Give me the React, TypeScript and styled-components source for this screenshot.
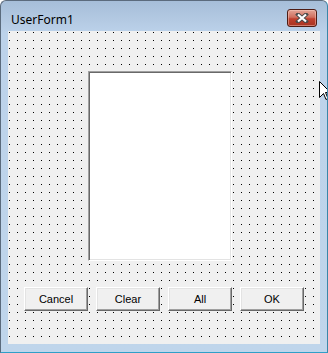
import styled, { createGlobalStyle } from "styled-components";

const GlobalStyle = createGlobalStyle`
  html, body {
    margin: 0;
    padding: 0;
    background: #ffffff;
  }
`;

const Window = styled.div`
  position: relative;
  width: 328px;
  height: 353px;
  box-sizing: border-box;
  display: flex;
  flex-direction: column;
  border: 1px solid #5b6b7d;
  border-right-color: #3a86a8;
  border-bottom-color: #2f9fc8;
  border-radius: 6px 6px 0 0;
  background: linear-gradient(#a6bed9 0px, #b4cae3 20px, #bcd2ea 32px, #bfd5eb 100%);
  overflow: hidden;
  font-family: "Noto Sans", "Open Sans", sans-serif;
`;

const TitleBar = styled.div`
  height: 30px;
  flex-shrink: 0;
  display: flex;
  align-items: flex-start;
  justify-content: space-between;
`;

const Title = styled.span`
  margin: 11px 0 0 10px;
  font-size: 12px;
  line-height: 16px;
  color: #000000;
`;

const CloseButton = styled.div`
  margin: 8px 10px 0 0;
  width: 30px;
  height: 18px;
  box-sizing: border-box;
  border: 1px solid #4e1d15;
  border-radius: 3px;
  background: linear-gradient(#e3a597 0%, #d0705f 45%, #c0402e 55%, #a83422 100%);
  box-shadow: inset 0 0 0 1px rgba(255, 210, 200, 0.45);
  display: flex;
  align-items: center;
  justify-content: center;
`;

const Client = styled.div`
  flex: 1;
  margin: 0 7px 8px 7px;
  padding-top: 40px;
  background-color: #f0f0f0;
  background-image: conic-gradient(from 270deg at 1px 1px, #000000 90deg, transparent 0);
  background-size: 8px 8px;
  background-position: 1px 1px;
  display: flex;
  flex-direction: column;
`;

const ListBox = styled.div`
  margin-left: 80px;
  width: 144px;
  height: 190px;
  box-sizing: border-box;
  background: #ffffff;
  border: 1px solid;
  border-color: #a0a0a0 #ffffff #ffffff #a0a0a0;
  box-shadow: inset 1px 1px 0 #696969, inset -1px -1px 0 #e3e3e3;
`;

const ButtonRow = styled.div`
  margin-top: 26px;
  padding-left: 16px;
  display: flex;
  gap: 8px;
`;

const Button = styled.div`
  width: 64px;
  height: 24px;
  box-sizing: border-box;
  background: #f0f0f0;
  border: 1px solid;
  border-color: #ffffff #696969 #696969 #ffffff;
  box-shadow: inset -1px -1px 0 #a0a0a0, inset 1px 1px 0 #e3e3e3;
  display: flex;
  align-items: center;
  justify-content: center;
  font-family: "Liberation Sans", Arial, sans-serif;
  font-size: 11px;
  color: #000000;
`;

const Cursor = styled.svg`
  position: absolute;
  left: 318px;
  top: 80px;
`;

const labels = ["Cancel", "Clear", "All", "OK"];

const App = () => {
  return (
    <>
      <GlobalStyle />
      <Window>
        <TitleBar>
          <Title>UserForm1</Title>
          <CloseButton>
            <svg width="14" height="10" viewBox="0 0 14 10">
              <path d="M3 1.5 L11 8.5 M11 1.5 L3 8.5" stroke="#4a4a4a" strokeWidth="4" strokeLinecap="square" />
              <path d="M3 1.5 L11 8.5 M11 1.5 L3 8.5" stroke="#ffffff" strokeWidth="2.2" />
            </svg>
          </CloseButton>
        </TitleBar>
        <Client>
          <ListBox />
          <ButtonRow>
            {labels.map((label) => (
              <Button key={label}>{label}</Button>
            ))}
          </ButtonRow>
        </Client>
        <Cursor width="12" height="20" viewBox="0 0 12 20">
          <path d="M0.5 0.5 L0.5 16.5 L4.5 12.5 L7 18.5 L9 17.5 L6.5 11.5 L11.5 11.5 Z" fill="#ffffff" stroke="#000000" strokeWidth="1" />
        </Cursor>
      </Window>
    </>
  );
};

export default App;
